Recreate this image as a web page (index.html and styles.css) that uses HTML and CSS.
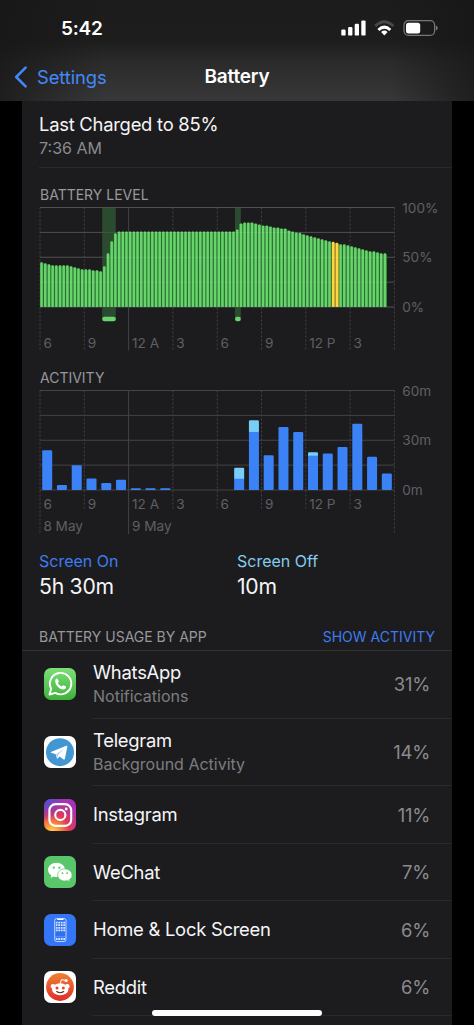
FILE: index.html
```html
<!DOCTYPE html>
<html lang="en">
  <head>
    <meta charset="UTF-8" />
    <meta name="viewport" content="width=device-width, initial-scale=1.0" />
    <title>Battery</title>
    <link rel="stylesheet" href="styles.css">
  </head>
  <body>
    <header class="top-bar">
      <div class="status-bar">
        <span class="clock">5:42</span>
        <svg class="status-icons" width="98" height="18" viewBox="0 0 98 18">
          <!-- signal -->
          <g fill="#fff">
            <rect x="1.3" y="9.6" width="4.3" height="6" rx="1.2" />
            <rect x="8.1" y="7.1" width="4.3" height="8.5" rx="1.2" />
            <rect x="14.7" y="3.8" width="4.3" height="11.8" rx="1.2" />
            <rect x="21.3" y="0.4" width="4.3" height="15.2" rx="1.2" />
          </g>
          <!-- wifi -->
          <g fill="none" stroke-width="3">
            <path d="M35.3 6 Q44.3 -2.4 53.4 6" stroke="#48484a" />
            <path d="M38.4 10 Q44.3 4.4 50.3 10" stroke="#fff" />
          </g>
          <path d="M41.1 12 Q44.3 9.2 47.6 12 L44.8 14.9 Q44.3 15.4 43.9 14.9 Z" fill="#fff" />
          <!-- battery -->
          <rect x="64" y="0.7" width="30.6" height="14.6" rx="4.4" fill="none" stroke="#77777a" stroke-width="1.2" />
          <rect x="66" y="2.7" width="14.2" height="10.7" rx="2.5" fill="#fff" />
          <path d="M95.8 5.5 Q97.8 6.1 97.8 8 Q97.8 9.9 95.8 10.5 Z" fill="#77777a" />
        </svg>
      </div>
      <nav class="nav-bar">
        <a class="back">
          <svg width="14" height="22" viewBox="0 0 14 22">
            <path d="M11.6 1.6 L2.2 11 L11.6 20.4" fill="none" stroke="#4289f7" stroke-width="2.5" stroke-linecap="round" stroke-linejoin="round" />
          </svg>
          <span>Settings</span>
        </a>
        <h1>Battery</h1>
      </nav>
    </header>

    <main class="card">
      <section class="last-charge">
        <div class="charge-title">Last Charged to 85%</div>
        <div class="charge-time">7:36 AM</div>
      </section>

      <section class="chart-block">
        <h2>BATTERY LEVEL</h2>
        <svg id="levelChart" class="chart" width="413" height="155"></svg>
      </section>

      <section class="chart-block">
        <h2>ACTIVITY</h2>
        <svg id="activityChart" class="chart" width="413" height="155"></svg>
      </section>

      <section class="screen-time">
        <div>
          <div class="on-label">Screen On</div>
          <div class="time-value">5h 30m</div>
        </div>
        <div>
          <div class="off-label">Screen Off</div>
          <div class="time-value">10m</div>
        </div>
      </section>

      <div class="usage-header">
        <h2>BATTERY USAGE BY APP</h2>
        <a class="show-activity">SHOW ACTIVITY</a>
      </div>

      <ul class="app-list">
        <li class="app tall">
          <svg class="icon" viewBox="0 0 32 32">
            <defs>
              <linearGradient id="waBg" x1="0" y1="0" x2="0" y2="1">
                <stop offset="0" stop-color="#7be077" />
                <stop offset="1" stop-color="#3fb13c" />
              </linearGradient>
            </defs>
            <rect width="32" height="32" rx="7" fill="url(#waBg)" />
            <path d="M5.5 26.5 L7.2 20.7 A10.7 10.7 0 1 1 11.3 24.9 Z" fill="none" stroke="#fff" stroke-width="1.9" stroke-linejoin="round" />
            <path d="M11.2 12.2 C11.6 10.8 12.7 10.2 13.6 10.7 L14.8 13.4 C14.8 14.1 14 14.6 13.8 15.1 C14.6 16.8 16 17.8 17.6 18.5 C18.2 18.2 18.8 17.2 19.4 17.2 L22 18.5 C22.4 20.2 20.8 21.5 19.2 21.5 C15.2 21.3 11 17 11.2 12.2 Z" fill="#fff" />
          </svg>
          <div class="info">
            <div class="name">WhatsApp</div>
            <div class="detail">Notifications</div>
          </div>
          <span class="percent">31%</span>
        </li>
        <li class="app tall">
          <svg class="icon" viewBox="0 0 32 32">
            <rect width="32" height="32" rx="7" fill="#fff" />
            <circle cx="16" cy="16.2" r="14" fill="#4296d2" />
            <path d="M6.9 16.1 L22.3 9.8 Q23.5 9.5 23.3 10.9 L20.9 22.7 Q20.5 24.1 19.2 23.3 L15.6 20.6 L13.7 22.5 Q13 23 12.8 22 L11.7 18.2 L7.2 16.8 Q6.5 16.5 6.9 16.1 Z" fill="#fff" />
            <path d="M11.9 18.2 L20.3 12.7 L14.2 18.7 L13.4 22.3 Z" fill="#b7d6ee" />
          </svg>
          <div class="info">
            <div class="name">Telegram</div>
            <div class="detail">Background Activity</div>
          </div>
          <span class="percent">14%</span>
        </li>
        <li class="app">
          <svg class="icon" viewBox="0 0 32 32">
            <defs>
              <radialGradient id="igWarm" cx="0.25" cy="1.03" r="1">
                <stop offset="0" stop-color="#ffd65c" />
                <stop offset="0.25" stop-color="#fb9138" />
                <stop offset="0.55" stop-color="#e03a58" />
                <stop offset="1" stop-color="#a832b5" />
              </radialGradient>
              <radialGradient id="igCool" cx="0" cy="0" r="0.7">
                <stop offset="0" stop-color="#4a51d4" />
                <stop offset="0.4" stop-color="#5f48cc" stop-opacity="0.75" />
                <stop offset="1" stop-color="#8b38c0" stop-opacity="0" />
              </radialGradient>
            </defs>
            <rect width="32" height="32" rx="7" fill="url(#igWarm)" />
            <rect width="32" height="32" rx="7" fill="url(#igCool)" />
            <rect x="5.4" y="5.1" width="21.8" height="21.8" rx="6.2" fill="none" stroke="#fff" stroke-width="2.1" />
            <circle cx="16.3" cy="16" r="5.1" fill="none" stroke="#fff" stroke-width="2.1" />
            <circle cx="22.2" cy="10" r="1.4" fill="#fff" />
          </svg>
          <div class="name">Instagram</div>
          <span class="percent">11%</span>
        </li>
        <li class="app">
          <svg class="icon" viewBox="0 0 32 32">
            <rect width="32" height="32" rx="7" fill="#5ac66c" />
            <path d="M12.6 6.8 C7.8 6.8 4.1 9.9 4.1 13.8 C4.1 16.1 5.3 18.1 7.3 19.4 L6.6 21.9 L9.4 20.4 Q11 20.9 12.8 20.9 C17.5 20.9 21 17.7 21 13.8 C21 9.9 17.2 6.8 12.6 6.8 Z" fill="#fff" />
            <path d="M20.8 12.9 C16.7 12.9 13.7 15.6 13.7 18.9 C13.7 22.3 16.8 24.9 20.8 24.9 Q22.3 24.9 23.6 24.5 L26 25.8 L25.4 23.6 C27.1 22.5 28 20.8 28 18.9 C28 15.6 24.8 12.9 20.8 12.9 Z" fill="#fff" stroke="#5ac66c" stroke-width="0.7" />
            <g fill="#5ac66c">
              <circle cx="9.8" cy="11.7" r="1.1" />
              <circle cx="15.4" cy="11.7" r="1.1" />
              <circle cx="18.5" cy="17.2" r="0.9" />
              <circle cx="23.2" cy="17.2" r="0.9" />
            </g>
          </svg>
          <div class="name">WeChat</div>
          <span class="percent">7%</span>
        </li>
        <li class="app">
          <svg class="icon" viewBox="0 0 32 32">
            <rect width="32" height="32" rx="7" fill="#3476f6" />
            <rect x="10.7" y="4.5" width="11.3" height="23" rx="2" fill="#2f70f1" stroke="#bcd5ff" stroke-width="1" />
            <path d="M13.8 5.4 H18.9" stroke="#fff" stroke-width="1.4" stroke-linecap="round" />
            <!-- app dots -->
            <g stroke="#d5e5ff" stroke-width="1.8" stroke-dasharray="1.8 0.7">
              <path d="M11.8 8.6 H21.1" />
              <path d="M11.8 11.2 H21.1" />
              <path d="M11.8 13.8 H21.1" />
              <path d="M11.8 16.4 H21.1" />
              <path d="M11.8 25 H21.1" />
            </g>
            <path d="M11.2 22.8 H21.5" stroke="#86aff9" stroke-width="0.6" />
          </svg>
          <div class="name">Home &amp; Lock Screen</div>
          <span class="percent">6%</span>
        </li>
        <li class="app">
          <svg class="icon" viewBox="0 0 32 32">
            <defs>
              <linearGradient id="rdBg" x1="0" y1="0" x2="0" y2="1">
                <stop offset="0" stop-color="#ef8132" />
                <stop offset="1" stop-color="#e12c2b" />
              </linearGradient>
            </defs>
            <rect width="32" height="32" rx="7" fill="#fff" />
            <circle cx="16" cy="16" r="13.9" fill="url(#rdBg)" />
            <path d="M16.2 13 L17.4 8.6 L21.4 9.4" fill="none" stroke="#fff" stroke-width="1" />
            <g fill="#fff">
              <circle cx="22.1" cy="9.5" r="1.6" />
              <circle cx="9" cy="15.2" r="2.3" />
              <circle cx="23.3" cy="15.2" r="2.3" />
              <ellipse cx="16.2" cy="18.3" rx="8.2" ry="6" />
            </g>
            <circle cx="13" cy="17" r="1.5" fill="#e2492c" />
            <circle cx="19.3" cy="17" r="1.5" fill="#e2492c" />
            <path d="M12.7 20.5 Q16.2 22.9 19.7 20.5" fill="none" stroke="#5a2a22" stroke-width="1.1" stroke-linecap="round" />
          </svg>
          <div class="name">Reddit</div>
          <span class="percent">6%</span>
        </li>
      </ul>
    </main>
    <div class="home-indicator"></div>

    <script>
      const PLOT_WIDTH = 354.4;
      const PLOT_HEIGHT = 99.5;
      const LEFT = 1;
      const TOP = 7.5;
      const BOTTOM = TOP + PLOT_HEIGHT;
      const hourWidth = PLOT_WIDTH / 24;

      // battery level, one value per 15 minutes
      const levels = [
        45, 44, 43, 42, 42, 42, 42, 42, 41, 40, 39, 38, 38, 38, 37, 37, 36,
        41, 54, 66, 74,
        ...Array(32).fill(76),
        78, 84, 85, 85, 85, 84, 83, 82, 82, 81, 80, 80, 79, 79, 77, 76, 75,
        74.5, 73, 72, 71, 70, 69, 68, 67, 66, 65.5, 64.5, 63, 63, 62, 61,
        60, 59, 58, 57, 56, 56, 55, 54, 54,
      ];

      // minutes per hour: [screen on, screen off]
      const activity = [
        [24, 0], [3, 0], [15, 0], [7, 0], [4.2, 0], [6.2, 0],
        [1, 0], [1, 0], [1, 0], [0, 0], [0, 0], [0, 0], [0, 0],
        [6.8, 6.6], [35, 7], [21, 0], [38, 0], [35, 0],
        [20.7, 2], [22, 0], [26, 0], [40, 0], [20, 0], [10, 0],
      ];

      const hours = ["6", "9", "12 A", "3", "6", "9", "12 P", "3"];

      function line(x1, y1, x2, y2, cls) {
        return `<line x1="${x1}" y1="${y1}" x2="${x2}" y2="${y2}" class="${cls}" />`;
      }

      function rect(x, y, w, h, cls, rx = 0) {
        return `<rect x="${x}" y="${y}" width="${w}" height="${h}" rx="${rx}" class="${cls}" />`;
      }

      function text(x, y, str) {
        return `<text x="${x}" y="${y}">${str}</text>`;
      }

      function drawRows(cls) {
        let out = "";
        for (let i = 0; i <= 4; i++) {
          const y = TOP + (PLOT_HEIGHT / 4) * i;
          out += line(LEFT, y, LEFT + PLOT_WIDTH, y, cls);
        }
        return out;
      }

      function drawColumns(bottomAt) {
        let out = "";
        for (let i = 0; i <= 8; i++) {
          const x = LEFT + hourWidth * 3 * i;
          out += line(x, TOP, x, bottomAt(i), i === 2 ? "grid" : "grid dashed");
        }
        return out;
      }

      function drawHours(y) {
        return hours.map((h, i) => text(LEFT + hourWidth * 3 * i + 3.4, y, h)).join("");
      }

      function drawScale(labels) {
        return labels.map((l, i) => text(363.3, TOP + 5 + (PLOT_HEIGHT / 2) * i, l)).join("");
      }

      function drawLevel() {
        const step = hourWidth / 4;
        let out = drawRows("grid") + drawColumns(() => 150.5);
        // charging periods
        [[63.2, 13.6], [196, 5.8]].forEach(([x, w]) => {
          out += rect(x, TOP, w, 112, "charging");
          out += rect(x, 116.8, w, 4.4, "charging-mark", 2.2);
        });
        levels.forEach((level, i) => {
          const h = (PLOT_HEIGHT * level) / 100;
          const low = i === 79 || i === 80;
          const x = LEFT + i * step;
          out += rect(x, BOTTOM - h + 1, step, h - 1, low ? "gap-low" : "gap");
          out += rect(x + 0.3, BOTTOM - h, 2.5, h, low ? "low" : "full", 0.8);
        });
        out += drawRows("grid over");
        out += drawHours(147.8) + drawScale(["100%", "50%", "0%"]);
        document.getElementById("levelChart").innerHTML = out;
      }

      function drawActivity() {
        let out = drawRows("grid");
        out += drawColumns((i) => (i === 0 || i === 2 || i === 8 ? 151 : 127.5));
        activity.forEach(([on, off], i) => {
          const x = LEFT + i * hourWidth + 2.2;
          const onH = (PLOT_HEIGHT * on) / 60;
          const offH = (PLOT_HEIGHT * off) / 60;
          if (off) {
            out += rect(x, BOTTOM - onH - offH, 10, offH + 1, "off", 1.2);
            out += rect(x, BOTTOM - onH, 10, onH, "on");
          } else if (on) {
            out += rect(x, BOTTOM - onH, 10, onH, "on", on > 2 ? 1.2 : 0.4);
          }
        });
        out += drawHours(125.7) + drawScale(["60m", "30m", "0m"]);
        out += text(LEFT + 3.4, 148, "8 May");
        out += text(LEFT + hourWidth * 6 + 3.4, 148, "9 May");
        document.getElementById("activityChart").innerHTML = out;
      }

      drawLevel();
      drawActivity();
    </script>
  </body>
</html>
```
FILE: styles.css
```css
* {
  box-sizing: border-box;
}
body {
  font-family: Inter, "Liberation Sans", sans-serif;
  background-color: #000;
  color: #f5f5f7;
  margin: 0;
  height: 1025px;
  overflow: hidden;
  font-size: 18.4px;
  letter-spacing: -0.25px;
}
h1,
h2 {
  margin: 0;
  font-weight: 400;
}
/* Header */
.top-bar {
  height: 101px;
  background:
    linear-gradient(90deg, rgba(22, 22, 22, 0.75), rgba(22, 22, 22, 0) 22%, rgba(22, 22, 22, 0) 82%, rgba(22, 22, 22, 0.75)),
    linear-gradient(#1c1c1d 0%, #1d1d1e 40%, #2b2b2c 62%, #303031 78%, #38383a 100%);
}
.status-bar {
  display: flex;
  justify-content: space-between;
  height: 54px;
  padding: 20px 36px 0 61px;
}
.clock {
  font-size: 19px;
  font-weight: 600;
  line-height: 18px;
  letter-spacing: -0.2px;
  color: #fff;
}
.nav-bar {
  display: grid;
  grid-template-columns: 1fr auto 1fr;
  align-items: center;
  height: 45px;
  padding: 0 14px;
}
.back {
  display: flex;
  align-items: center;
  gap: 9px;
  color: #4289f7;
  letter-spacing: -0.1px;
}
.nav-bar h1 {
  padding-bottom: 1px;
  font-size: 19px;
  font-weight: 600;
  letter-spacing: -0.2px;
  color: #fff;
}
/* Content */
.card {
  width: 430px;
  height: 924px;
  margin: 0 auto;
  background-color: #1c1c1e;
  overflow: hidden;
}
.last-charge {
  height: 67px;
  margin-left: 17px;
  padding-top: 11px;
  border-bottom: 1px solid #29292b;
}
.charge-title {
  line-height: 24px;
}
.charge-time {
  font-size: 16px;
  line-height: 24px;
  letter-spacing: 0;
  color: #8a8a8e;
}
.chart-block {
  height: 183px;
  padding: 18px 0 0 17px;
}
.chart-block h2 {
  padding-left: 1px;
}
.chart-block h2,
.usage-header {
  font-size: 14px;
  line-height: 17px;
  letter-spacing: 0;
  color: #98989d;
}
.chart {
  display: block;
  margin-top: -3px;
}
.chart text {
  font-size: 13.6px;
  letter-spacing: 0;
  fill: #5f5f63;
}
.grid {
  stroke: #434345;
  stroke-width: 1;
}
.dashed {
  stroke-dasharray: 2 2;
}
.over {
  stroke: #fff;
  stroke-opacity: 0.08;
}
.charging {
  fill: #2b4b30;
}
.charging-mark,
.full {
  fill: #69d36c;
}
.gap {
  fill: #2b7d35;
}
.low {
  fill: #fbd63e;
}
.gap-low {
  fill: #a5862c;
}
.on {
  fill: #3b82f7;
}
.off {
  fill: #78cdf9;
}
/* Screen time */
.screen-time {
  display: grid;
  grid-template-columns: 198px 1fr;
  height: 77px;
  padding: 17px 0 0 17px;
}
.on-label,
.off-label {
  font-size: 16px;
  line-height: 20px;
  letter-spacing: 0;
  color: #3f7bf0;
}
.off-label {
  color: #83cdf0;
}
.time-value {
  font-size: 21.2px;
  line-height: 31px;
}
.usage-header {
  display: flex;
  justify-content: space-between;
  align-items: flex-end;
  height: 40px;
  padding: 0 17px 5px;
  border-bottom: 1px solid #303032;
}
.usage-header h2 {
  font-size: 14px;
}
.show-activity {
  color: #3f7bf0;
}
/* App list */
.app-list {
  list-style: none;
  margin: 0;
  padding: 0;
}
.app {
  display: flex;
  align-items: center;
  height: 57.5px;
  padding: 0 22px;
  background: linear-gradient(#29292b, #29292b) 70px 100% / 360px 1px no-repeat;
}
.app.tall {
  height: 67.5px;
}
.app.tall:first-child {
  padding-bottom: 2px;
}
.icon {
  width: 32px;
  height: 32px;
  margin-right: 17px;
}
.name {
  line-height: 25px;
}
.detail {
  font-size: 16px;
  line-height: 23px;
  letter-spacing: 0;
  color: #7c7c80;
}
.percent {
  margin-left: auto;
  color: #8a8a8e;
}
.home-indicator {
  position: absolute;
  left: 152px;
  top: 1010px;
  width: 170px;
  height: 6px;
  border-radius: 3px;
  background-color: #fff;
}
```
